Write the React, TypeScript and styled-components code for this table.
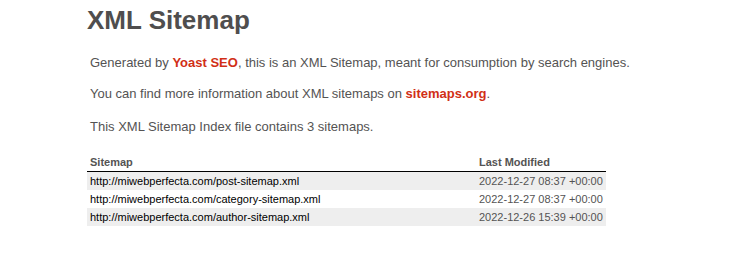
import React from 'react';
import styled, { createGlobalStyle } from 'styled-components';

const GlobalStyle = createGlobalStyle`
  body {
    margin: 0;
    background: #fff;
    font-family: "Liberation Sans", Arial, Helvetica, sans-serif;
    font-size: 13px;
    color: #545353;
  }
`;

const Content = styled.div`
  padding: 5px 0 0 87px;
`;

const Title = styled.h1`
  margin: 0 0 20px;
  font-size: 26px;
  line-height: 30px;
  font-weight: bold;
  color: #4f4e4e;
`;

const Expl = styled.p<{ $gap: number }>`
  margin: 0 3px ${props => props.$gap}px;
  line-height: 16px;
`;

const RedLink = styled.a`
  color: #d12f16;
  font-weight: bold;
  text-decoration: none;
`;

const Table = styled.table`
  border: none;
  border-collapse: collapse;
  width: 519px;
  table-layout: fixed;
`;

const Th = styled.th<{ $width: number }>`
  width: ${props => props.$width}px;
  text-align: left;
  font-size: 11px;
  line-height: 12px;
  padding: 3px;
  border-bottom: 1px solid #000;
  color: #545353;
`;

const Row = styled.tr`
  &:nth-child(odd) td {
    background-color: #eee;
  }
`;

const Td = styled.td`
  font-size: 11px;
  line-height: 12px;
  padding: 3px;
  white-space: nowrap;
`;

const UrlLink = styled.a`
  color: #000;
  text-decoration: none;
`;

const sitemaps = [
  { url: 'http://miwebperfecta.com/post-sitemap.xml', modified: '2022-12-27 08:37 +00:00' },
  { url: 'http://miwebperfecta.com/category-sitemap.xml', modified: '2022-12-27 08:37 +00:00' },
  { url: 'http://miwebperfecta.com/author-sitemap.xml', modified: '2022-12-26 15:39 +00:00' },
];

const App: React.FC = () => {
  return (
    <>
      <GlobalStyle />
      <Content>
        <Title>XML Sitemap</Title>
        <Expl $gap={15}>
          Generated by <RedLink href="#">Yoast SEO</RedLink>, this is an XML Sitemap, meant for consumption by search engines.
        </Expl>
        <Expl $gap={17}>
          You can find more information about XML sitemaps on <RedLink href="#">sitemaps.org</RedLink>.
        </Expl>
        <Expl $gap={18}>This XML Sitemap Index file contains 3 sitemaps.</Expl>
        <Table>
          <thead>
            <tr>
              <Th $width={383}>Sitemap</Th>
              <Th $width={124}>Last Modified</Th>
            </tr>
          </thead>
          <tbody>
            {sitemaps.map(s => (
              <Row key={s.url}>
                <Td>
                  <UrlLink href="#">{s.url}</UrlLink>
                </Td>
                <Td>{s.modified}</Td>
              </Row>
            ))}
          </tbody>
        </Table>
      </Content>
    </>
  );
};

export default App;
